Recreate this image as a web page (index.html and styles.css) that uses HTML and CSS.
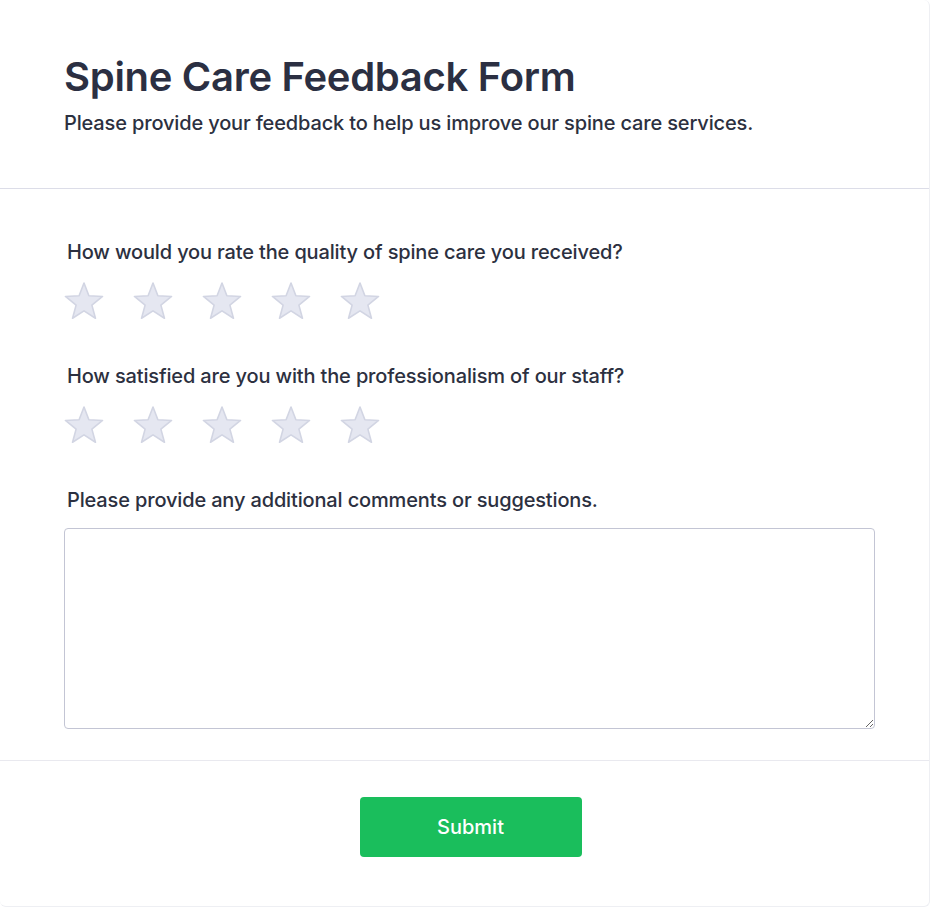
FILE: index.html
```html
<!DOCTYPE html>
<html>
<head>
<meta charset="utf-8">
<link rel="stylesheet" href="styles.css">
</head>
<body>
<div class="card">
  <header class="head">
    <h1 class="title">Spine Care Feedback Form</h1>
    <p class="subtitle">Please provide your feedback to help us improve our spine care services.</p>
  </header>
  <main class="body">
    <section class="question">
      <label class="qlabel">How would you rate the quality of spine care you received?</label>
      <div class="stars">
        <svg class="star" viewBox="0 0 40 38"><path d="M20 1L24.9 13.8L38.55 14.47L27.9 23.1L31.46 36.28L20 28.9L8.54 36.28L12.1 23.1L1.45 14.47L15.1 13.8Z"/></svg>
        <svg class="star" viewBox="0 0 40 38"><path d="M20 1L24.9 13.8L38.55 14.47L27.9 23.1L31.46 36.28L20 28.9L8.54 36.28L12.1 23.1L1.45 14.47L15.1 13.8Z"/></svg>
        <svg class="star" viewBox="0 0 40 38"><path d="M20 1L24.9 13.8L38.55 14.47L27.9 23.1L31.46 36.28L20 28.9L8.54 36.28L12.1 23.1L1.45 14.47L15.1 13.8Z"/></svg>
        <svg class="star" viewBox="0 0 40 38"><path d="M20 1L24.9 13.8L38.55 14.47L27.9 23.1L31.46 36.28L20 28.9L8.54 36.28L12.1 23.1L1.45 14.47L15.1 13.8Z"/></svg>
        <svg class="star" viewBox="0 0 40 38"><path d="M20 1L24.9 13.8L38.55 14.47L27.9 23.1L31.46 36.28L20 28.9L8.54 36.28L12.1 23.1L1.45 14.47L15.1 13.8Z"/></svg>
      </div>
    </section>
    <section class="question">
      <label class="qlabel">How satisfied are you with the professionalism of our staff?</label>
      <div class="stars">
        <svg class="star" viewBox="0 0 40 38"><path d="M20 1L24.9 13.8L38.55 14.47L27.9 23.1L31.46 36.28L20 28.9L8.54 36.28L12.1 23.1L1.45 14.47L15.1 13.8Z"/></svg>
        <svg class="star" viewBox="0 0 40 38"><path d="M20 1L24.9 13.8L38.55 14.47L27.9 23.1L31.46 36.28L20 28.9L8.54 36.28L12.1 23.1L1.45 14.47L15.1 13.8Z"/></svg>
        <svg class="star" viewBox="0 0 40 38"><path d="M20 1L24.9 13.8L38.55 14.47L27.9 23.1L31.46 36.28L20 28.9L8.54 36.28L12.1 23.1L1.45 14.47L15.1 13.8Z"/></svg>
        <svg class="star" viewBox="0 0 40 38"><path d="M20 1L24.9 13.8L38.55 14.47L27.9 23.1L31.46 36.28L20 28.9L8.54 36.28L12.1 23.1L1.45 14.47L15.1 13.8Z"/></svg>
        <svg class="star" viewBox="0 0 40 38"><path d="M20 1L24.9 13.8L38.55 14.47L27.9 23.1L31.46 36.28L20 28.9L8.54 36.28L12.1 23.1L1.45 14.47L15.1 13.8Z"/></svg>
      </div>
    </section>
    <section class="question">
      <label class="qlabel">Please provide any additional comments or suggestions.</label>
      <textarea class="comments"></textarea>
    </section>
  </main>
  <footer class="foot">
    <button class="submit">Submit</button>
  </footer>
</div>
</body>
</html>
```

FILE: styles.css
```css
html, body {
  margin: 0;
  padding: 0;
  background: #ffffff;
}
body {
  font-family: Inter, "Noto Sans", sans-serif;
  color: #2c3040;
}
.card {
  width: 930px;
  height: 907px;
  box-sizing: border-box;
  border-right: 1px solid #eeeff3;
  border-bottom: 1px solid #eeeff3;
  border-radius: 0 6px 6px 6px;
  display: flex;
  flex-direction: column;
}
.head {
  padding: 53px 64px 0;
  height: 189px;
  box-sizing: border-box;
  border-bottom: 1px solid #dcdde8;
}
.title {
  margin: 0;
  font-size: 40px;
  line-height: 48px;
  font-weight: 600;
  color: #2b2f42;
  letter-spacing: -0.3px;
}
.subtitle {
  margin: 8px 0 0;
  font-size: 20px;
  line-height: 28px;
  font-weight: 500;
  color: #2c3040;
  letter-spacing: -0.15px;
}
.body {
  padding: 49px 54px 0 64px;
  height: 572px;
  box-sizing: border-box;
  border-bottom: 1px solid #e9e9ef;
}
.question {
  display: flex;
  flex-direction: column;
}
.qlabel {
  font-size: 20px;
  line-height: 28px;
  font-weight: 500;
  color: #2c3040;
  padding-left: 3px;
  letter-spacing: -0.15px;
}
.stars {
  display: flex;
  gap: 29px;
  margin-top: 16px;
  margin-bottom: 42px;
}
.star {
  width: 40px;
  height: 38px;
  fill: #e5e7f1;
  stroke: #d2d5e3;
  stroke-width: 1.6;
  stroke-linejoin: round;
}
.comments {
  margin-top: 14px;
  height: 201px;
  box-sizing: border-box;
  border: 1px solid #c3c5d4;
  border-radius: 4px;
  resize: vertical;
  font-family: inherit;
  font-size: 16px;
}
.foot {
  flex: 1;
  display: flex;
  justify-content: center;
  padding-top: 36px;
  padding-left: 12px;
}
.submit {
  width: 222px;
  height: 60px;
  border: none;
  border-radius: 4px;
  background: #1abe5c;
  color: #ffffff;
  font-family: Inter, "Noto Sans", sans-serif;
  font-size: 20px;
  font-weight: 500;
}
```
